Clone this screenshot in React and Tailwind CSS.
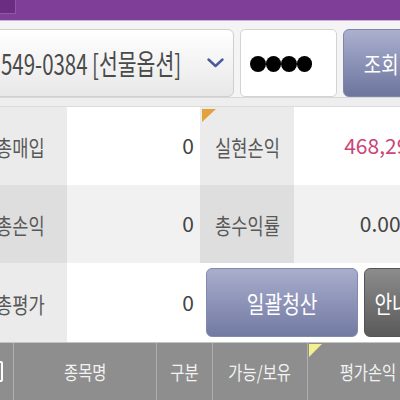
import React from 'react';

const Label = ({ children }) => (
  <span className="inline-block whitespace-nowrap text-[22px] leading-none scale-x-[0.8] text-[#585858]">{children}</span>
);

const App = () => {
  return (
    <div className="w-[400px] h-[400px] overflow-hidden bg-[#f4f4f4] font-['Noto_Sans_CJK_KR',sans-serif]">
      <div className="w-[454px] -ml-[27px]">
        {/* purple title bar */}
        <div className="h-[21px] bg-[#7f3e97] border-b border-[#cfb0dc] flex">
          <div className="w-[43px] h-[14px] bg-[#6b2d82] border-r border-b border-[#8e58a4]" />
        </div>

        {/* account row */}
        <div className="h-[76px] pt-[8px] pl-[10px] flex gap-[6px]">
          <div className="w-[251px] h-[68px] rounded-[6px] border border-[#cfcfcf] bg-linear-to-b from-white to-[#e8e8e8] flex items-center pl-[17px] pr-[9px]">
            <div className="flex-1 min-w-0 pt-[2px]">
              <span className="inline-block whitespace-nowrap origin-left scale-x-[0.73] text-[28px] leading-none text-[#4a4a4a]">
                549-0384 [선물옵션]
              </span>
            </div>
            <svg className="shrink-0" width="17" height="10" viewBox="0 0 17 10">
              <polyline points="1.5,1.5 8.5,8 15.5,1.5" fill="none" stroke="#4b5a9e" strokeWidth="2.4" strokeLinecap="round" strokeLinejoin="round" />
            </svg>
          </div>
          <div className="w-[97px] h-[68px] rounded-[5px] border border-[#d3d3d3] bg-white flex items-center pl-[9px] pt-[2px]">
            <div className="w-[15.5px] h-[16px] rounded-full bg-black" />
            <div className="w-[15.5px] h-[16px] rounded-full bg-black" />
            <div className="w-[15.5px] h-[16px] rounded-full bg-black" />
            <div className="w-[15.5px] h-[16px] rounded-full bg-black" />
          </div>
          <div className="w-[77px] h-[68px] rounded-[6px] border border-[#7f86ab] bg-linear-to-b from-[#abb0cf] to-[#6e759e] flex items-center justify-center">
            <span className="inline-block whitespace-nowrap text-[23px] leading-none scale-x-[0.82] text-white">조회</span>
          </div>
        </div>

        <div className="h-[10px] bg-[#eeeeee] border-t border-[#d8d8d8] border-b border-b-[#dcdcdc]" />

        {/* summary table */}
        <div className="grid grid-cols-[94px_133px_94px_133px]">
          <div className="h-[78px] bg-[#ebebeb] flex items-center justify-center"><Label>총매입</Label></div>
          <div className="h-[78px] bg-white flex items-center justify-end pr-[6px] text-[21px] text-[#444]">0</div>
          <div className="relative h-[78px] bg-[#ebebeb] flex items-center justify-center">
            <svg className="absolute left-[2px] top-[2px]" width="14" height="13" viewBox="0 0 14 13">
              <polygon points="0,0 14,0 0,13" fill="#e3a33c" />
            </svg>
            <Label>실현손익</Label>
          </div>
          <div className="h-[78px] bg-white flex items-center justify-end pr-[7px] text-[21px] text-[#c9457a]">468,290</div>

          <div className="h-[78px] bg-[#dedede] flex items-center justify-center"><Label>총손익</Label></div>
          <div className="h-[78px] bg-[#f1f1f1] flex items-center justify-end pr-[6px] text-[21px] text-[#444]">0</div>
          <div className="h-[78px] bg-[#dedede] flex items-center justify-center"><Label>총수익률</Label></div>
          <div className="h-[78px] bg-[#f1f1f1] flex items-center justify-end pr-[7px] text-[21px] text-[#444]">0.00%</div>

          <div className="h-[79px] bg-[#ebebeb] flex items-center justify-center"><Label>총평가</Label></div>
          <div className="h-[79px] bg-white flex items-center justify-end pr-[6px] text-[21px] text-[#444]">0</div>
          <div className="col-span-2 h-[79px] bg-white flex gap-[6px] pl-[6px] pr-[6px] py-[5px]">
            <div className="w-[152px] rounded-[6px] border border-[#8389ae] bg-linear-to-b from-[#a9aecd] to-[#737aa2] flex items-center justify-center">
              <span className="inline-block whitespace-nowrap text-[24px] leading-none scale-x-[0.8] text-white">일괄청산</span>
            </div>
            <div className="flex-1 rounded-[6px] border border-[#555] bg-linear-to-b from-[#8c8c8c] to-[#5a5a5a] flex items-center justify-center">
              <span className="inline-block whitespace-nowrap text-[24px] leading-none scale-x-[0.8] text-white">안내</span>
            </div>
          </div>
        </div>

        {/* list header */}
        <div className="h-[58px] bg-[#8e8e8e] border-t border-[#c4c4c4] grid grid-cols-[40px_143px_56px_95px_120px] text-[#f3f3f3]">
          <div className="flex items-center pl-[8px]">
            <div className="w-[22px] h-[21px] rounded-[2px] border-[2.5px] border-white" />
          </div>
          <div className="border-l border-[#b0b0b0] flex items-center justify-center">
            <span className="inline-block whitespace-nowrap text-[19px] leading-none scale-x-[0.81]">종목명</span>
          </div>
          <div className="border-l border-[#b0b0b0] flex items-center justify-center">
            <span className="inline-block whitespace-nowrap text-[19px] leading-none scale-x-[0.81]">구분</span>
          </div>
          <div className="border-l border-[#b0b0b0] flex items-center justify-center">
            <span className="inline-block whitespace-nowrap text-[19px] leading-none scale-x-[0.81]">가능/보유</span>
          </div>
          <div className="relative border-l border-[#b0b0b0] flex items-center justify-center">
            <svg className="absolute left-[1px] top-[1px]" width="13" height="13" viewBox="0 0 13 13">
              <polygon points="0,0 13,0 0,13" fill="#f4f08e" />
            </svg>
            <span className="inline-block whitespace-nowrap text-[19px] leading-none scale-x-[0.81]">평가손익</span>
          </div>
        </div>
      </div>
    </div>
  );
};

export default App;
